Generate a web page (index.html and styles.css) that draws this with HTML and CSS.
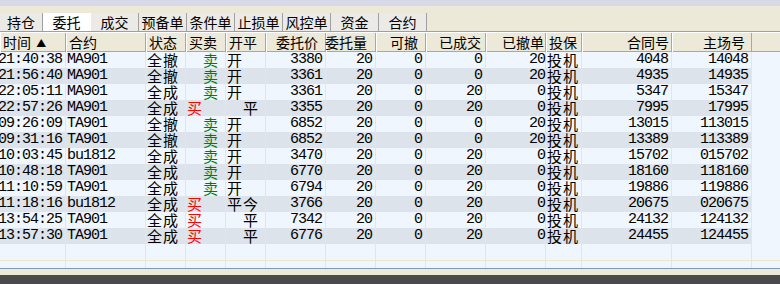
FILE: index.html
```html
<!DOCTYPE html>
<html>
<head>
<meta charset="utf-8">
<link rel="stylesheet" href="styles.css">
</head>
<body>
<div class="top"></div>
<div class="tabbar">
  <div class="tab first">持仓</div>
  <div class="tab active">委托</div>
  <div class="tab">成交</div>
  <div class="tab">预备单</div>
  <div class="tab">条件单</div>
  <div class="tab">止损单</div>
  <div class="tab">风控单</div>
  <div class="tab">资金</div>
  <div class="tab">合约</div>
</div>
<div class="grid">
  <div class="row head">
    <div class="c l">时间 <span class="arrow">▲</span></div>
    <div class="c l">合约</div>
    <div class="c l">状态</div>
    <div class="c l">买卖</div>
    <div class="c l">开平</div>
    <div class="c r p7">委托价</div>
    <div class="c r p9">委托量</div>
    <div class="c r p7">可撤</div>
    <div class="c r p4">已成交</div>
    <div class="c r p1">已撤单</div>
    <div class="c l">投保</div>
    <div class="c r p2">合同号</div>
    <div class="c r p6">主场号</div>
    <div class="c fill"></div>
  </div>

  <div class="row">
    <div class="c r m t">21:40:38</div><div class="c l m">MA901</div><div class="c l">全撤</div><div class="c l sell">卖</div><div class="c l">开</div>
    <div class="c r m">3380</div><div class="c r m">20</div><div class="c r m">0</div><div class="c r m">0</div><div class="c r m p0">20</div><div class="c l">投机</div><div class="c r m">4048</div><div class="c r m">14048</div><div class="c fill"></div>
  </div>
  <div class="row alt">
    <div class="c r m t">21:56:40</div><div class="c l m">MA901</div><div class="c l">全撤</div><div class="c l sell">卖</div><div class="c l">开</div>
    <div class="c r m">3361</div><div class="c r m">20</div><div class="c r m">0</div><div class="c r m">0</div><div class="c r m p0">20</div><div class="c l">投机</div><div class="c r m">4935</div><div class="c r m">14935</div><div class="c fill"></div>
  </div>
  <div class="row">
    <div class="c r m t">22:05:11</div><div class="c l m">MA901</div><div class="c l">全成</div><div class="c l sell">卖</div><div class="c l">开</div>
    <div class="c r m">3361</div><div class="c r m">20</div><div class="c r m">0</div><div class="c r m">20</div><div class="c r m p0">0</div><div class="c l">投机</div><div class="c r m">5347</div><div class="c r m">15347</div><div class="c fill"></div>
  </div>
  <div class="row alt">
    <div class="c r m t">22:57:26</div><div class="c l m">MA901</div><div class="c l">全成</div><div class="c l buy">买</div><div class="c l ind">平</div>
    <div class="c r m">3355</div><div class="c r m">20</div><div class="c r m">0</div><div class="c r m">20</div><div class="c r m p0">0</div><div class="c l">投机</div><div class="c r m">7995</div><div class="c r m">17995</div><div class="c fill"></div>
  </div>
  <div class="row">
    <div class="c r m t">09:26:09</div><div class="c l m">TA901</div><div class="c l">全撤</div><div class="c l sell">卖</div><div class="c l">开</div>
    <div class="c r m">6852</div><div class="c r m">20</div><div class="c r m">0</div><div class="c r m">0</div><div class="c r m p0">20</div><div class="c l">投机</div><div class="c r m">13015</div><div class="c r m">113015</div><div class="c fill"></div>
  </div>
  <div class="row alt">
    <div class="c r m t">09:31:16</div><div class="c l m">TA901</div><div class="c l">全撤</div><div class="c l sell">卖</div><div class="c l">开</div>
    <div class="c r m">6852</div><div class="c r m">20</div><div class="c r m">0</div><div class="c r m">0</div><div class="c r m p0">20</div><div class="c l">投机</div><div class="c r m">13389</div><div class="c r m">113389</div><div class="c fill"></div>
  </div>
  <div class="row">
    <div class="c r m t">10:03:45</div><div class="c l m">bu1812</div><div class="c l">全成</div><div class="c l sell">卖</div><div class="c l">开</div>
    <div class="c r m">3470</div><div class="c r m">20</div><div class="c r m">0</div><div class="c r m">20</div><div class="c r m p0">0</div><div class="c l">投机</div><div class="c r m">15702</div><div class="c r m">015702</div><div class="c fill"></div>
  </div>
  <div class="row alt">
    <div class="c r m t">10:48:18</div><div class="c l m">TA901</div><div class="c l">全成</div><div class="c l sell">卖</div><div class="c l">开</div>
    <div class="c r m">6770</div><div class="c r m">20</div><div class="c r m">0</div><div class="c r m">20</div><div class="c r m p0">0</div><div class="c l">投机</div><div class="c r m">18160</div><div class="c r m">118160</div><div class="c fill"></div>
  </div>
  <div class="row">
    <div class="c r m t">11:10:59</div><div class="c l m">TA901</div><div class="c l">全成</div><div class="c l sell">卖</div><div class="c l">开</div>
    <div class="c r m">6794</div><div class="c r m">20</div><div class="c r m">0</div><div class="c r m">20</div><div class="c r m p0">0</div><div class="c l">投机</div><div class="c r m">19886</div><div class="c r m">119886</div><div class="c fill"></div>
  </div>
  <div class="row alt">
    <div class="c r m t">11:18:16</div><div class="c l m">bu1812</div><div class="c l">全成</div><div class="c l buy">买</div><div class="c l">平今</div>
    <div class="c r m">3766</div><div class="c r m">20</div><div class="c r m">0</div><div class="c r m">20</div><div class="c r m p0">0</div><div class="c l">投机</div><div class="c r m">20675</div><div class="c r m">020675</div><div class="c fill"></div>
  </div>
  <div class="row">
    <div class="c r m t">13:54:25</div><div class="c l m">TA901</div><div class="c l">全成</div><div class="c l buy">买</div><div class="c l ind">平</div>
    <div class="c r m">7342</div><div class="c r m">20</div><div class="c r m">0</div><div class="c r m">20</div><div class="c r m p0">0</div><div class="c l">投机</div><div class="c r m">24132</div><div class="c r m">124132</div><div class="c fill"></div>
  </div>
  <div class="row alt">
    <div class="c r m t">13:57:30</div><div class="c l m">TA901</div><div class="c l">全成</div><div class="c l buy">买</div><div class="c l ind">平</div>
    <div class="c r m">6776</div><div class="c r m">20</div><div class="c r m">0</div><div class="c r m">20</div><div class="c r m p0">0</div><div class="c l">投机</div><div class="c r m">24455</div><div class="c r m">124455</div><div class="c fill"></div>
  </div>
  <div class="row empty">
    <div class="c"></div><div class="c"></div><div class="c"></div><div class="c"></div><div class="c"></div><div class="c"></div><div class="c"></div><div class="c"></div><div class="c"></div><div class="c"></div><div class="c"></div><div class="c"></div><div class="c"></div><div class="c fill"></div>
  </div>
  <div class="row empty short">
    <div class="c"></div><div class="c"></div><div class="c"></div><div class="c"></div><div class="c"></div><div class="c"></div><div class="c"></div><div class="c"></div><div class="c"></div><div class="c"></div><div class="c"></div><div class="c"></div><div class="c"></div><div class="c fill"></div>
  </div>
</div>
<div class="footer"></div>
<div class="status"></div>
</body>
</html>
```

FILE: styles.css
```css
html, body {
  margin: 0;
  padding: 0;
}
body {
  width: 780px;
  height: 284px;
  overflow: hidden;
  background: #ece9d8;
  font-family: "Noto Sans CJK SC", "Liberation Sans", sans-serif;
  font-size: 15px;
  color: #000;
}
.top {
  height: 6px;
  background: #d6d9e8;
}
.tabbar {
  height: 26px;
  padding-top: 7px;
  box-sizing: border-box;
  display: flex;
  align-items: stretch;
  border-bottom: 1px solid #8ea2bc;
  background: #ece9d8;
}
.tab {
  width: 47px;
  flex: none;
  background: #ebeae6;
  border-right: 1px solid #a0a0a0;
  text-align: center;
  font-size: 14px;
  line-height: 18px;
  white-space: nowrap;
  overflow: hidden;
}
.tab.first {
  width: 42px;
}
.tab.active {
  background: #fff;
  border-right: 1px solid #fff;
}
.grid {
  background: #f0f6fd;
}
.row {
  display: grid;
  grid-template-columns: 66px 80px 40px 40px 40px 60px 50px 50px 60px 60px 36px 90px 80px 1fr;
  height: 16px;
  line-height: 16px;
}
.row.alt .c:not(.fill) {
  background: #dde3ea;
}
.c {
  box-sizing: border-box;
  border-right: 1px solid #ede6cf;
  white-space: nowrap;
  letter-spacing: 1px;
}
.c.t {
  overflow: hidden;
}
.c.fill {
  border-right: none;
}
.l {
  text-align: left;
  padding-left: 1px;
}
.r {
  text-align: right;
  padding-right: 3px;
  direction: rtl;
}
.m {
  font-family: "Liberation Mono", monospace;
  font-size: 15px;
  letter-spacing: -1px;
}
.r.m {
  padding-right: 3px;
}
.p0 { padding-right: 0 !important; }
.p1 { padding-right: 1px; }
.p2 { padding-right: 2px; }
.p4 { padding-right: 4px; }
.p6 { padding-right: 6px; }
.p7 { padding-right: 7px; }
.p9 { padding-right: 8px; }
.sell {
  color: #008000;
  padding-left: 17px;
}
.buy {
  color: #ff0000;
  padding-left: 1px;
}
.ind {
  padding-left: 17px;
}
.row.head {
  height: 20px;
  line-height: 19px;
  background: #ece9d8;
  border-top: 1px solid #fff;
  box-sizing: border-box;
  border-bottom: 1px solid #aca899;
}
.row.head .c {
  font-size: 14px;
  letter-spacing: 0;
  border-right: 1px solid #aca899;
  box-shadow: inset 1px 0 0 #fff;
}
.row.head .c.l {
  padding-left: 3px;
}
.row.head .c.fill {
  border-right: none;
  box-shadow: none;
}
.arrow {
  font-size: 10px;
  vertical-align: 1px;
  margin-left: 2px;
}
.row.empty {
  border-bottom: 1px solid #ede6cf;
  box-sizing: border-box;
  height: 17px;
}
.row.empty.short {
  height: 7px;
  border-bottom: none;
}
.footer {
  height: 6px;
  border-top: 1px solid #7f99b6;
  background: #ece9d8;
}
.status {
  height: 20px;
  background: #4a4a4a;
}
```
